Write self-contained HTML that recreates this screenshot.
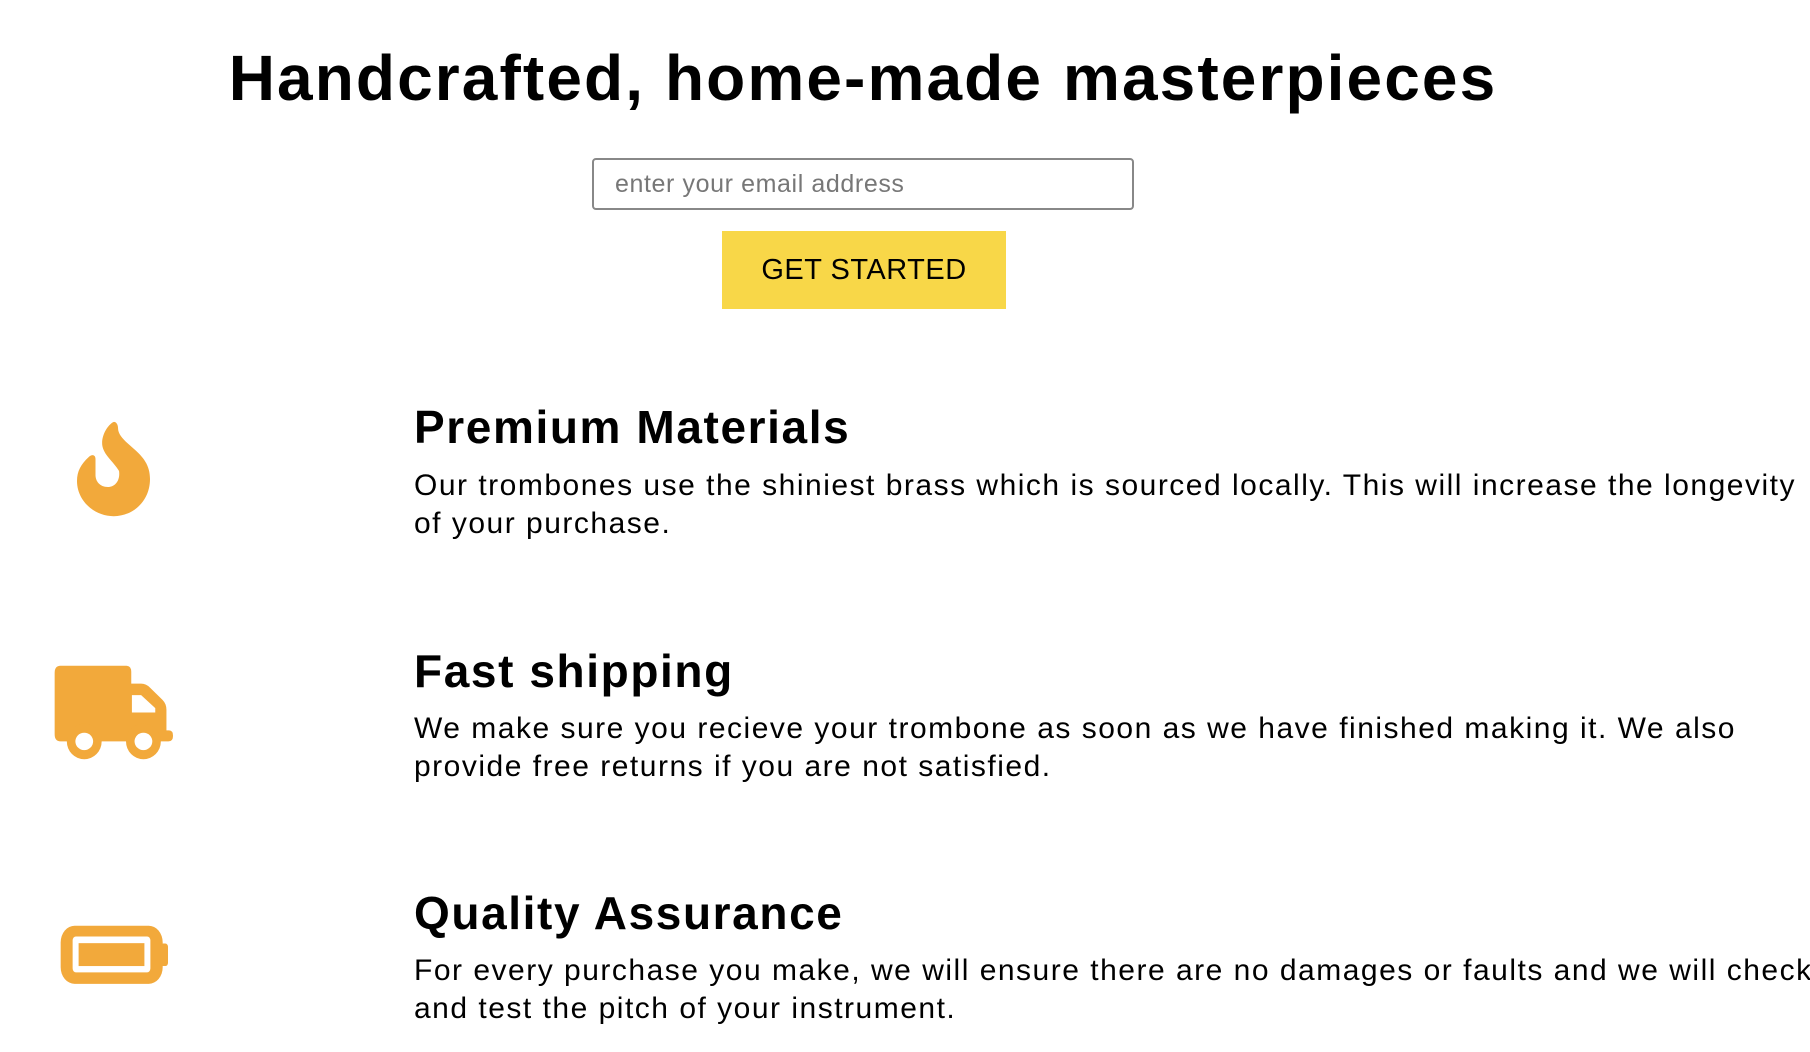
<!DOCTYPE html>
<html><head><meta charset="utf-8"><style>
body{margin:0;width:1810px;height:1052px;background:#fff;position:relative;overflow:hidden;font-family:"Liberation Sans",sans-serif;color:#000}
.a{position:absolute;white-space:nowrap}
h1{position:absolute;margin:0;left:0;width:1726px;text-align:center;top:46px;font-size:64px;line-height:64px;font-weight:bold;letter-spacing:2.1px}
input{position:absolute;left:592px;top:158px;width:542px;height:52px;box-sizing:border-box;border:2px solid #888;border-radius:4px;padding:0 0 0 21px;font-family:"Liberation Sans",sans-serif;font-size:25px;letter-spacing:0.6px;outline:none}
input::placeholder{color:#777}
.btn{position:absolute;left:722px;top:231px;width:284px;height:78px;background:#F8D748;font-size:29px;line-height:78px;text-align:center;letter-spacing:0.5px}
.h{font-size:46px;line-height:46px;font-weight:bold;left:414px;letter-spacing:1.6px}
.p{font-size:30px;line-height:38px;left:414px;letter-spacing:1.5px}
svg{position:absolute}
</style></head><body>
<h1>Handcrafted, home-made masterpieces</h1>
<input type="text" placeholder="enter your email address">
<div class="btn">GET STARTED</div>

<svg style="left:77px;top:421px" width="73" height="96" viewBox="233 100 217 240" preserveAspectRatio="none"><path fill="#F2A93B" d="M340,103 C325,110 305,135 308,160 C312,185 340,200 358,225 C362,250 345,265 325,265 C300,265 288,250 288,235 L288,195 C288,185 278,182 268,190 C245,208 233,225 233,250 C233,300 285,338 342,338 C400,338 450,300 450,245 C450,210 430,190 400,168 C375,150 355,135 355,118 C355,105 345,100 340,103 Z"/></svg>

<svg style="left:54px;top:665px" width="120" height="95" viewBox="160 695 365 240" preserveAspectRatio="none"><path fill="#F2A93B" d="M180,697 H380 Q395,697 395,712 V742 H425 Q440,742 452,752 L490,783 Q502,793 502,808 V860 H510 Q522,860 522,874 Q522,888 508,888 H180 Q162,888 162,870 V715 Q162,697 180,697 Z"/><path fill="#fff" d="M397,771 H425 L468,804 V815 H397 Z"/><ellipse cx="252" cy="888" rx="53" ry="45" fill="#F2A93B"/><ellipse cx="432" cy="888" rx="53" ry="45" fill="#F2A93B"/><ellipse cx="252" cy="888" rx="27" ry="22" fill="#fff"/><ellipse cx="432" cy="888" rx="27" ry="22" fill="#fff"/></svg>

<svg style="left:60px;top:925px" width="109" height="60" viewBox="178 1336 328 152" preserveAspectRatio="none"><rect x="180" y="1338" width="307" height="147" rx="42" fill="#F2A93B"/><rect x="480" y="1383" width="23" height="57" rx="8" fill="#F2A93B"/><rect x="216" y="1365" width="234" height="91" rx="10" fill="#fff"/><rect x="234" y="1382" width="198" height="58" fill="#F2A93B"/></svg>

<div class="a h" style="top:404px">Premium Materials</div>
<div class="a p" style="top:467px">Our trombones use the shiniest brass which is sourced locally. This will increase the longevity<br>of your purchase.</div>
<div class="a h" style="top:648px">Fast shipping</div>
<div class="a p" style="top:710px">We make sure you recieve your trombone as soon as we have finished making it. We also<br>provide free returns if you are not satisfied.</div>
<div class="a h" style="top:890px">Quality Assurance</div>
<div class="a p" style="top:952px">For every purchase you make, we will ensure there are no damages or faults and we will check<br>and test the pitch of your instrument.</div>
</body></html>
